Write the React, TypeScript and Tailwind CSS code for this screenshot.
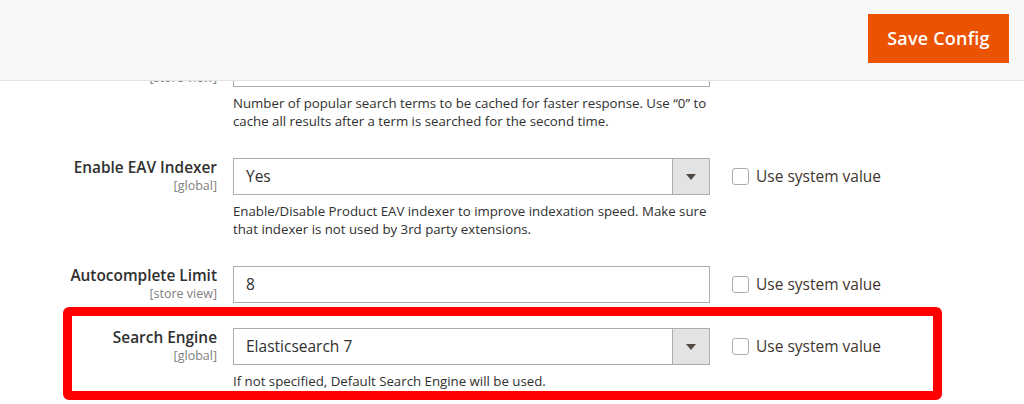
type Row = {
    label: string;
    scope: string;
    kind: "select" | "input";
    value: string;
    note?: string[];
    systemValue?: boolean;
};

const rows: Row[] = [
    {
        label: "Top Results to Cache",
        scope: "[store view]",
        kind: "input",
        value: "100",
        note: [
            "Number of popular search terms to be cached for faster response. Use \u201C0\u201D to",
            "cache all results after a term is searched for the second time.",
        ],
    },
    {
        label: "Enable EAV Indexer",
        scope: "[global]",
        kind: "select",
        value: "Yes",
        note: [
            "Enable/Disable Product EAV indexer to improve indexation speed. Make sure",
            "that indexer is not used by 3rd party extensions.",
        ],
        systemValue: true,
    },
    {
        label: "Autocomplete Limit",
        scope: "[store view]",
        kind: "input",
        value: "8",
        systemValue: true,
    },
];

const searchEngine: Row = {
    label: "Search Engine",
    scope: "[global]",
    kind: "select",
    value: "Elasticsearch 7",
    note: ["If not specified, Default Search Engine will be used."],
    systemValue: true,
};

function Control({ row }: { row: Row }) {
    if (row.kind === "select") {
        return (
            <div className="flex h-[37px] border border-[#adadad] bg-white">
                <div className="flex-1 flex items-center pl-[12px] text-[15.5px] text-[#303030]">
                    {row.value}
                </div>
                <div className="w-[37px] flex items-center justify-center bg-[#e3e3e3] border-l border-[#adadad]">
                    <span className="w-0 h-0 border-x-[5px] border-x-transparent border-t-[6px] border-t-[#514943]" />
                </div>
            </div>
        );
    }
    return (
        <div className="flex items-center h-[37px] border border-[#adadad] bg-white pl-[12px] text-[15.5px] text-[#303030]">
            {row.value}
        </div>
    );
}

function SystemValue() {
    return (
        <label className="flex items-center gap-[7px] h-[37px] text-[15.5px] text-[#41362f]">
            <span className="w-[17px] h-[17px] rounded-[3px] border border-[#adadad] bg-white" />
            Use system value
        </label>
    );
}

function FieldRow({ row, inBox }: { row: Row; inBox?: boolean }) {
    return (
        <div
            className={
                inBox
                    ? "grid grid-cols-[145px_477px_auto] gap-x-[16px]"
                    : "grid grid-cols-[217px_477px_auto] gap-x-[16px]"
            }
        >
            <div className="text-right">
                <div className="text-[15.4px] leading-[20px] font-semibold text-[#303030] whitespace-nowrap">
                    {row.label}
                </div>
                <div className="text-[12.5px] leading-[16px] text-[#808080]">
                    {row.scope}
                </div>
            </div>
            <div>
                <Control row={row} />
                {row.note && (
                    <div className="mt-[7px] text-[13.25px] leading-[18px] text-[#303030]">
                        {row.note.map((line) => (
                            <div key={line} className="whitespace-nowrap">
                                {line}
                            </div>
                        ))}
                    </div>
                )}
            </div>
            <div className="pl-[6px]">{row.systemValue && <SystemValue />}</div>
        </div>
    );
}

export default function App() {
    return (
        <div
            className="relative w-[1024px] h-[404px] overflow-hidden bg-white"
            style={{ fontFamily: '"Open Sans", "Noto Sans", sans-serif' }}
        >
            <div className="pt-[50px] flex flex-col">
                <div className="mb-[28px]">
                    <FieldRow row={rows[0]} />
                </div>
                <div className="mb-[28px]">
                    <FieldRow row={rows[1]} />
                </div>
                <FieldRow row={rows[2]} />
                <div className="mt-[4px] ml-[63px] w-[879px] h-[93px] border-[9px] border-[#ff0000] rounded-[6px] pt-[12px]">
                    <FieldRow row={searchEngine} inBox />
                </div>
            </div>

            <header className="absolute top-0 left-0 right-0 h-[81px] bg-[#f8f8f8] border-b border-[#e3e3e3] flex items-center justify-end pr-[15px]">
                <button className="mt-[-3px] w-[141px] h-[49px] bg-[#eb5202] text-white text-[18px] font-semibold tracking-[0.2px]">
                    Save Config
                </button>
            </header>
        </div>
    );
}
